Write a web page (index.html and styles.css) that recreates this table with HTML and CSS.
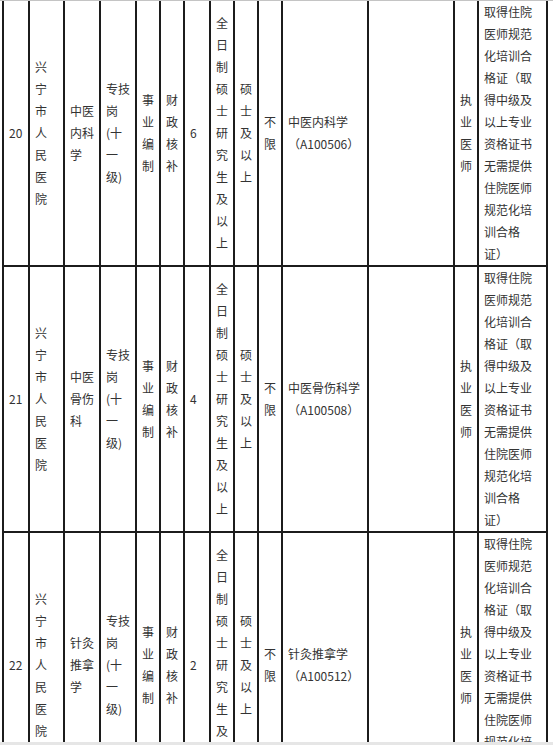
FILE: index.html
```html
<!DOCTYPE html>
<html lang="zh-CN">
<head>
<meta charset="utf-8">
<title>招聘岗位表</title>
<link rel="stylesheet" href="styles.css">
</head>
<body>
<div class="viewport">
  <div class="table">
    <div class="cell">20</div>
    <div class="cell">兴<br>宁<br>市<br>人<br>民<br>医<br>院</div>
    <div class="cell">中医<br>内科<br>学</div>
    <div class="cell">专技<br>岗<br>(十<br>一<br>级)</div>
    <div class="cell">事<br>业<br>编<br>制</div>
    <div class="cell">财<br>政<br>核<br>补</div>
    <div class="cell">6</div>
    <div class="cell">全<br>日<br>制<br>硕<br>士<br>研<br>究<br>生<br>及<br>以<br>上</div>
    <div class="cell">硕<br>士<br>及<br>以<br>上</div>
    <div class="cell">不<br>限</div>
    <div class="cell">中医内科学<br>（A100506）</div>
    <div class="cell"></div>
    <div class="cell">执<br>业<br>医<br>师</div>
    <div class="cell">取得住院<br>医师规范<br>化培训合<br>格证（取<br>得中级及<br>以上专业<br>资格证书<br>无需提供<br>住院医师<br>规范化培<br>训合格<br>证）</div>

    <div class="cell">21</div>
    <div class="cell">兴<br>宁<br>市<br>人<br>民<br>医<br>院</div>
    <div class="cell">中医<br>骨伤<br>科</div>
    <div class="cell">专技<br>岗<br>(十<br>一<br>级)</div>
    <div class="cell">事<br>业<br>编<br>制</div>
    <div class="cell">财<br>政<br>核<br>补</div>
    <div class="cell">4</div>
    <div class="cell">全<br>日<br>制<br>硕<br>士<br>研<br>究<br>生<br>及<br>以<br>上</div>
    <div class="cell">硕<br>士<br>及<br>以<br>上</div>
    <div class="cell">不<br>限</div>
    <div class="cell">中医骨伤科学<br>（A100508）</div>
    <div class="cell"></div>
    <div class="cell">执<br>业<br>医<br>师</div>
    <div class="cell">取得住院<br>医师规范<br>化培训合<br>格证（取<br>得中级及<br>以上专业<br>资格证书<br>无需提供<br>住院医师<br>规范化培<br>训合格<br>证）</div>

    <div class="cell">22</div>
    <div class="cell">兴<br>宁<br>市<br>人<br>民<br>医<br>院</div>
    <div class="cell">针灸<br>推拿<br>学</div>
    <div class="cell">专技<br>岗<br>(十<br>一<br>级)</div>
    <div class="cell">事<br>业<br>编<br>制</div>
    <div class="cell">财<br>政<br>核<br>补</div>
    <div class="cell">2</div>
    <div class="cell">全<br>日<br>制<br>硕<br>士<br>研<br>究<br>生<br>及<br>以<br>上</div>
    <div class="cell">硕<br>士<br>及<br>以<br>上</div>
    <div class="cell">不<br>限</div>
    <div class="cell">针灸推拿学<br>（A100512）</div>
    <div class="cell"></div>
    <div class="cell">执<br>业<br>医<br>师</div>
    <div class="cell">取得住院<br>医师规范<br>化培训合<br>格证（取<br>得中级及<br>以上专业<br>资格证书<br>无需提供<br>住院医师<br>规范化培<br>训合格<br>证）</div>
  </div>
</div>
<div class="hscroll"></div>
</body>
</html>
```
FILE: styles.css
```css
html, body {
  margin: 0;
  padding: 0;
  background: #ffffff;
}

body {
  font-family: "Noto Sans CJK SC", "Noto Sans", sans-serif;
  font-size: 12px;
  line-height: 22px;
  color: #333333;
}

.viewport {
  box-sizing: border-box;
  height: 742px;
  overflow: hidden;
  border-top: 1px solid #c4c4c4;
}

.table {
  display: grid;
  grid-template-columns: 26px 35px 36px 36px 24px 24px 26px 24px 24px 24px 86px 86px 24px 69px;
  width: max-content;
  margin-left: 2px;
  border-left: 2px solid #1c1c1c;
}

.cell {
  box-sizing: border-box;
  display: flex;
  align-items: center;
  padding: 0 5px;
  border-right: 2px solid #1c1c1c;
  border-bottom: 2px solid #1c1c1c;
  white-space: nowrap;
  overflow: hidden;
}

.hscroll {
  height: 3px;
  background: #e6e6e6;
}
```
